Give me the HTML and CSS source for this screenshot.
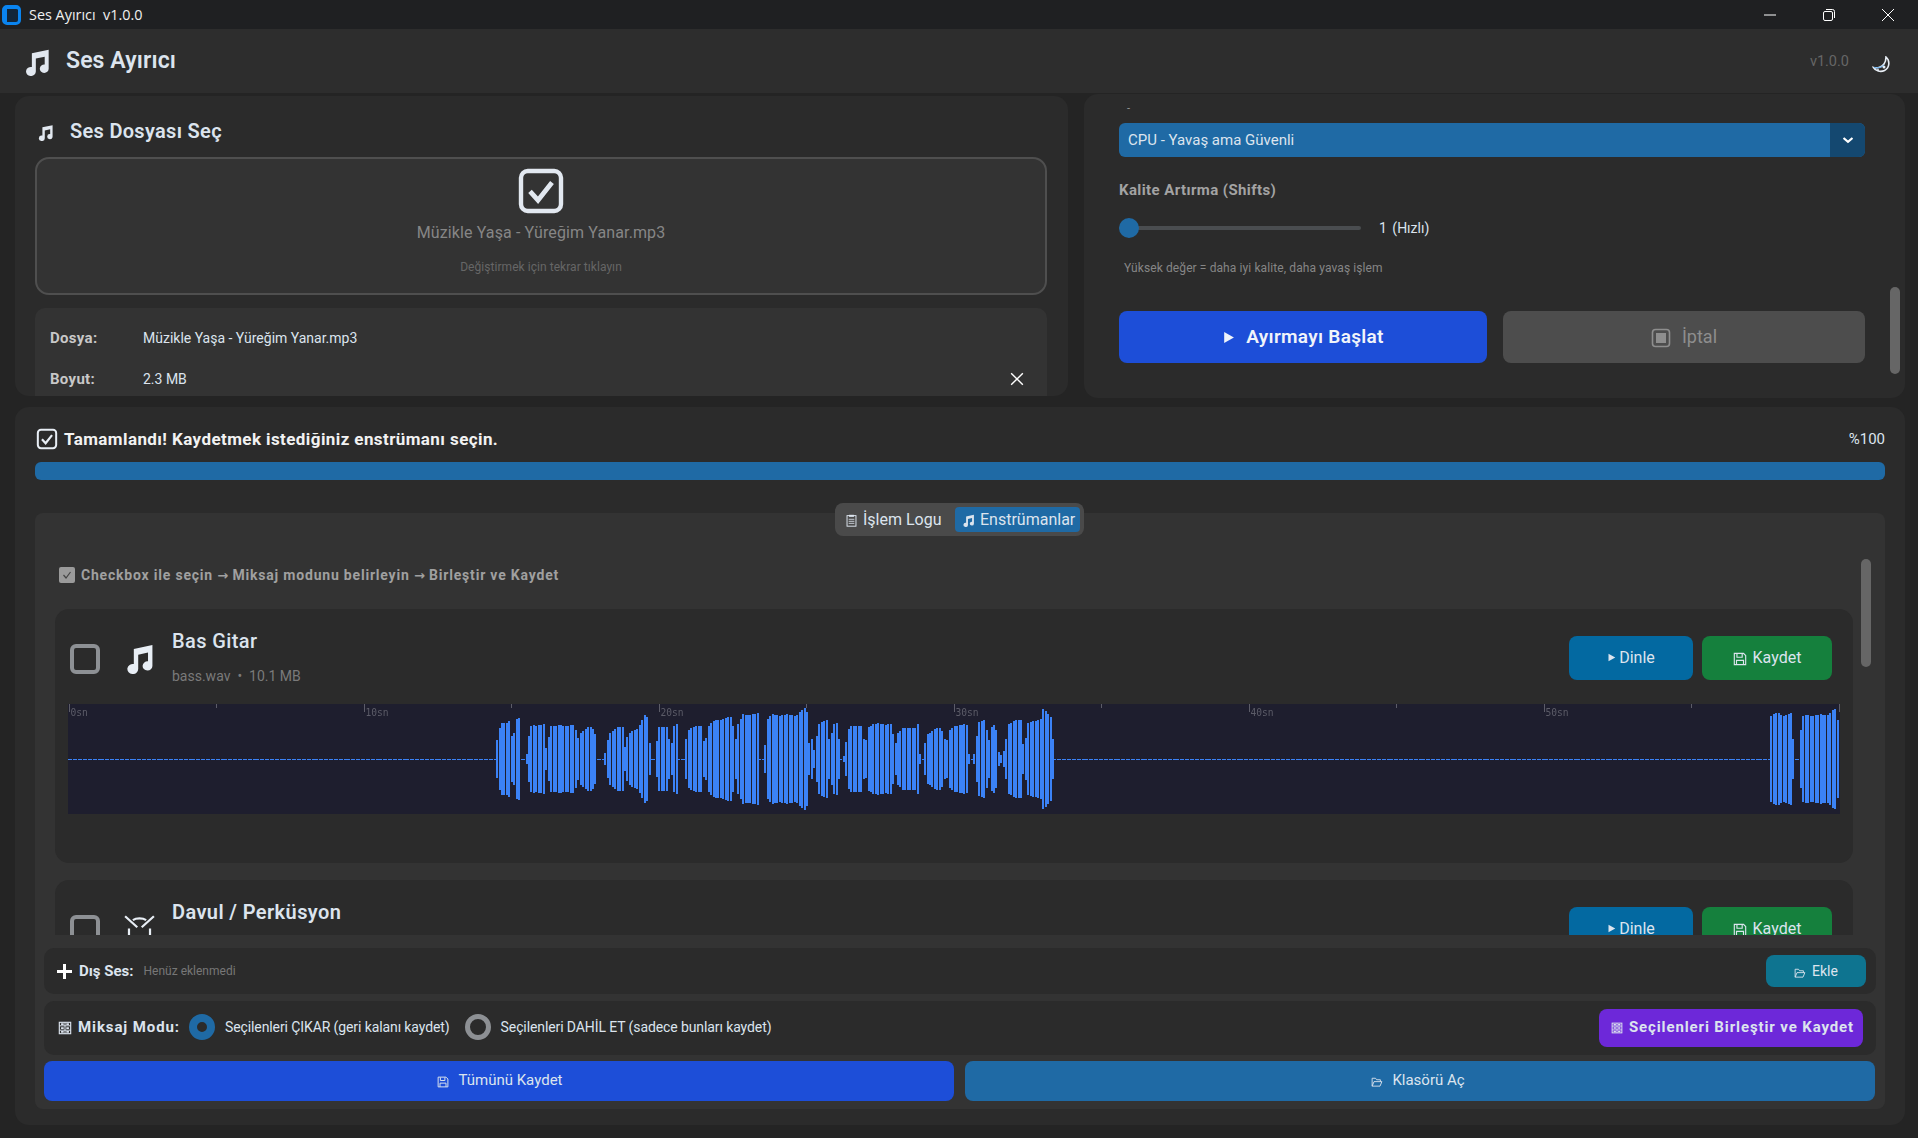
FILE: index.html
```html
<!DOCTYPE html>
<html lang="tr">
<head>
  <meta charset="UTF-8">
  <meta name="viewport" content="width=device-width, initial-scale=1.0">
  <title>Ses Ayırıcı</title>
  <link rel="stylesheet" href="styles.css">
</head>
<body>
  <svg class="sprite" aria-hidden="true">
    <symbol id="i-note" viewBox="0 0 24 24"><path d="M7.6 4.6 22 1.6v16.2a3.8 3.6 0 1 1-3.4-3.6V7.4l-7.6 1.7v11a4.2 3.9 0 1 1-3.4-3.8z" fill="currentColor"/></symbol>
    <symbol id="i-check" viewBox="0 0 24 24"><rect x="2" y="2" width="20" height="20" rx="3.4" fill="none" stroke="currentColor" stroke-width="2.2"/><path d="m6.5 12.2 4 4.4 7-8.8" fill="none" stroke="currentColor" stroke-width="2.400"/></symbol>
    <symbol id="i-play" viewBox="0 0 12 12"><path d="M2 1l9 5-9 5z" fill="currentColor"/></symbol>
    <symbol id="i-stop" viewBox="0 0 20 20"><rect x="1.5" y="1.5" width="17" height="17" rx="3" fill="none" stroke="currentColor" stroke-width="1.6"/><rect x="5" y="5" width="10" height="10" fill="currentColor"/></symbol>
    <symbol id="i-floppy" viewBox="0 0 16 16"><path d="M1.5 1.5h10.500l2.500 2.500v10.500h-13z" fill="none" stroke="currentColor" stroke-width="1.300"/><path d="M4.500 2v4h6V2M4 14.500V9.500h8v5" fill="none" stroke="currentColor" stroke-width="1.300"/></symbol>
    <symbol id="i-folder" viewBox="0 0 16 16"><path d="M1.500 13.500V3h4.500l1.500 2h5v2.500M1.500 13.500h10.500l2.500-6h-10.500z" fill="none" stroke="currentColor" stroke-width="1.200"/></symbol>
    <symbol id="i-clip" viewBox="0 0 14 16"><rect x="1.500" y="2" width="11" height="13" fill="none" stroke="currentColor" stroke-width="1.200"/><rect x="4" y="1" width="6" height="2.500" fill="currentColor"/><path d="M3.500 6.500h7M3.500 9h7M3.500 11.500h7" stroke="currentColor"/></symbol>
    <symbol id="i-abacus" viewBox="0 0 16 16"><rect x="1.500" y="1.500" width="13" height="13" fill="none" stroke="currentColor" stroke-width="1.300"/><path d="M1.500 5.500h13M1.500 10.500h13M8 1.500v13" stroke="currentColor" stroke-width="1.100"/><path d="M3.500 3.500h3M9.500 3.500h3M3.500 8h3M9.500 8h3M3.500 12.500h3M9.500 12.500h3" stroke="currentColor" stroke-width="2"/></symbol>
    <symbol id="i-drum" viewBox="0 0 28 28"><path d="M1 2l11 10M27 2 16 12" fill="none" stroke="currentColor" stroke-width="2"/><path d="M8 5.500C11 3.500 17 3.500 20 5.500M4.500 22V13M23.500 22V13" fill="none" stroke="currentColor" stroke-width="2"/></symbol>
  </svg>

  <div class="titlebar">
    <span class="app-logo"></span>
    <span class="app-title">Ses Ayırıcı&nbsp; v1.0.0</span>
    <div class="win-controls">
      <svg width="12" height="12" viewBox="0 0 12 12"><path d="M0 6h12" stroke="#fff"/></svg>
      <svg width="12" height="12" viewBox="0 0 12 12"><rect x=".5" y="2.500" width="9" height="9" rx="1.500" fill="none" stroke="#fff"/><path d="M3 .5h6.500a2 2 0 0 1 2 2V9" fill="none" stroke="#fff"/></svg>
      <svg width="12" height="12" viewBox="0 0 12 12"><path d="M0 0l12 12M12 0 0 12" stroke="#fff"/></svg>
    </div>
  </div>

  <header class="header">
    <svg class="header-icon"><use href="#i-note"/></svg>
    <h1 class="header-title">Ses Ayırıcı</h1>
    <span class="header-version">v1.0.0</span>
    <svg class="theme-icon" viewBox="0 0 20 17">
      <path d="M14 1c4 3.500 4 10.500-1.500 13.500-4 2-9 .5-11-3C5.500 12.500 10 11 12 8c1.500-2.200 2-4.500 2-7z" fill="none" stroke="#e8eef5" stroke-width="1.600"/>
      <path d="M2 11.500c3.500 1 7.500 0 10-2.500" fill="none" stroke="#5aa7ea"/>
      <circle cx="12" cy="11" r="1.500" fill="#e8eef5"/>
      <circle cx="6" cy="14" r="1" fill="#e8eef5"/>
    </svg>
  </header>

  <main class="main">
    <div class="top-row">
      <section class="panel file-panel">
        <div class="panel-title">
          <svg class="title-icon"><use href="#i-note"/></svg>
          <h2>Ses Dosyası Seç</h2>
        </div>
        <div class="dropzone">
          <svg class="drop-icon"><use href="#i-check"/></svg>
          <div class="drop-name">Müzikle Yaşa - Yüreğim Yanar.mp3</div>
          <div class="drop-hint">Değiştirmek için tekrar tıklayın</div>
        </div>
        <div class="file-info">
          <div class="info-row"><span class="info-key">Dosya:</span><span>Müzikle Yaşa - Yüreğim Yanar.mp3</span></div>
          <div class="info-row"><span class="info-key">Boyut:</span><span>2.3 MB</span>
            <svg class="info-close" viewBox="0 0 12 12"><path d="M1 1l10 10M11 1 1 11" stroke="#fff" stroke-width="1.200"/></svg>
          </div>
        </div>
      </section>

      <section class="panel settings-panel">
        <div class="cut-label">-</div>
        <div class="select">
          <span class="select-text">CPU - Yavaş ama Güvenli</span>
          <span class="select-arrow"><svg width="12" height="8" viewBox="0 0 12 8"><path d="M1.500 2l4.500 3.800 4.500-3.800" fill="none" stroke="#fff" stroke-width="2.200"/></svg></span>
        </div>
        <div class="field-label">Kalite Artırma (Shifts)</div>
        <div class="slider-row">
          <div class="slider"><span class="slider-knob"></span></div>
          <span class="slider-value">1 (Hızlı)</span>
        </div>
        <div class="field-note">Yüksek değer = daha iyi kalite, daha yavaş işlem</div>
        <div class="action-row">
          <button class="btn btn-start"><svg class="play-big"><use href="#i-play"/></svg>Ayırmayı Başlat</button>
          <button class="btn btn-cancel"><svg class="stop-icon"><use href="#i-stop"/></svg>İptal</button>
        </div>
        <span class="scroll-thumb settings-thumb"></span>
      </section>
    </div>

    <section class="panel result-panel">
      <div class="status-row">
        <svg class="status-icon"><use href="#i-check"/></svg>
        <span class="status-text">Tamamlandı! Kaydetmek istediğiniz enstrümanı seçin.</span>
        <span class="status-percent">%100</span>
      </div>
      <div class="progress"></div>

      <div class="tabview">
        <div class="tabs">
          <span class="tab"><svg class="tab-icon"><use href="#i-clip"/></svg>İşlem Logu</span>
          <span class="tab tab-active"><svg class="tab-icon"><use href="#i-note"/></svg>Enstrümanlar</span>
        </div>
        <span class="scroll-thumb tab-thumb"></span>

        <div class="stem-scroll">
          <div class="hint">
            <span class="hint-box"><svg width="10" height="10" viewBox="0 0 10 10"><path d="M1.500 5l2.500 3 4.500-6" fill="none" stroke="#444" stroke-width="1.200"/></svg></span>
            <span>Checkbox ile seçin <span class="hint-arrow">→</span> Miksaj modunu belirleyin <span class="hint-arrow">→</span> Birleştir ve Kaydet</span>
          </div>

          <article class="stem-card">
            <div class="stem-head">
              <span class="stem-check"></span>
              <svg class="stem-icon"><use href="#i-note"/></svg>
              <div class="stem-info">
                <div class="stem-name">Bas Gitar</div>
                <div class="stem-meta">bass.wav &nbsp;•&nbsp; 10.1 MB</div>
              </div>
              <button class="btn btn-listen"><svg class="play-small"><use href="#i-play"/></svg>Dinle</button>
              <button class="btn btn-save"><svg class="btn-icon"><use href="#i-floppy"/></svg>Kaydet</button>
            </div>
            <div class="waveform" id="waveform"><canvas id="waveCanvas" width="1772" height="110"></canvas></div>
          </article>

          <article class="stem-card">
            <div class="stem-head">
              <span class="stem-check"></span>
              <svg class="stem-icon"><use href="#i-drum"/></svg>
              <div class="stem-info">
                <div class="stem-name stem-name-bold">Davul / Perküsyon</div>
                <div class="stem-meta">&nbsp;</div>
              </div>
              <button class="btn btn-listen"><svg class="play-small"><use href="#i-play"/></svg>Dinle</button>
              <button class="btn btn-save"><svg class="btn-icon"><use href="#i-floppy"/></svg>Kaydet</button>
            </div>
          </article>
        </div>

        <div class="bar-row extra-row">
          <svg class="plus-icon" viewBox="0 0 15 15"><path d="M7.500 0v15M0 7.500h15" stroke="#fff" stroke-width="3"/></svg>
          <span class="bar-label">Dış Ses:</span>
          <span class="extra-empty">Henüz eklenmedi</span>
          <button class="btn btn-add"><svg class="add-icon"><use href="#i-folder"/></svg>Ekle</button>
        </div>

        <div class="bar-row mix-row">
          <svg class="mix-icon"><use href="#i-abacus"/></svg>
          <span class="bar-label mix-label">Miksaj Modu:</span>
          <span class="radio radio-on"></span>
          <span class="radio-text">Seçilenleri ÇIKAR (geri kalanı kaydet)</span>
          <span class="radio"></span>
          <span class="radio-text">Seçilenleri DAHİL ET (sadece bunları kaydet)</span>
          <button class="btn btn-merge"><svg class="add-icon"><use href="#i-abacus"/></svg>Seçilenleri Birleştir ve Kaydet</button>
        </div>

        <div class="footer-row">
          <button class="btn btn-all"><svg class="add-icon"><use href="#i-floppy"/></svg>Tümünü Kaydet</button>
          <button class="btn btn-folder"><svg class="add-icon"><use href="#i-folder"/></svg>Klasörü Aç</button>
        </div>
      </div>
    </section>
  </main>

  <script src="waveform.js"></script>
</body>
</html>
```

FILE: styles.css
```css
* {
  box-sizing: border-box;
}

body {
  margin: 0;
  height: 1138px;
  overflow: hidden;
  background-color: #242424;
  color: #dce4ee;
  font-family: Roboto, "Liberation Sans", sans-serif;
  font-size: 14px;
}

.sprite {
  position: absolute;
  width: 0;
  height: 0;
}

h1, h2 {
  margin: 0;
}

button {
  border: none;
  font-family: inherit;
}

/* window bar */
.titlebar {
  height: 29px;
  display: flex;
  align-items: center;
  background-color: #1f2022;
  padding-left: 2px;
}

.app-logo {
  width: 19px;
  height: 20px;
  border-radius: 5px;
  background-color: #12263a;
  border-style: solid;
  border-color: #0a84f0;
  border-width: 4px 3px 3px 5px;
}

.app-title {
  margin-left: 8px;
  color: #f0f0f0;
  font-family: "Open Sans", sans-serif;
  font-size: 14.4px;
}

.win-controls {
  margin-left: auto;
  display: flex;
  gap: 47px;
  padding-right: 24px;
}

.header {
  height: 64px;
  display: flex;
  align-items: center;
  background-color: #2d2d2d;
  padding: 0 26px 0 23px;
}

.header-icon {
  width: 28px;
  height: 28px;
  margin-top: 2px;
  color: #e2e8f0;
}

.header-title {
  margin: -2px 0 0 15px;
  font-size: 23px;
  font-weight: 600;
  letter-spacing: .1px;
  color: #dce4ee;
}

.header-version {
  margin-left: auto;
  color: #666;
  font-size: 14.5px;
}

.theme-icon {
  width: 20px;
  height: 17px;
  margin: 7px 0 0 23px;
}

/* panels */
.main {
  padding-left: 15px;
}

.top-row {
  display: grid;
  grid-template-columns: 1053px 821px;
  column-gap: 16px;
  align-items: start;
}

.panel {
  position: relative;
  background-color: #2b2b2b;
  border-radius: 14px;
  overflow: hidden;
}

.file-panel {
  height: 300px;
  margin-top: 3px;
  padding: 20px 21px 0 20px;
}

.panel-title {
  height: 30px;
  display: flex;
  align-items: center;
  padding-left: 2px;
}

.panel-title h2 {
  margin-left: 16px;
  font-size: 20px;
  font-weight: 600;
  letter-spacing: .3px;
  color: #dce4ee;
}

.title-icon {
  width: 17px;
  height: 17px;
  margin-top: 2px;
  color: #e2e8f0;
}

.dropzone {
  height: 138px;
  margin-top: 11px;
  border: 2px solid #4f4f4f;
  border-radius: 14px;
  background-color: #333;
  display: flex;
  flex-direction: column;
  align-items: center;
}

.drop-icon {
  width: 48px;
  height: 48px;
  margin-top: 8px;
  color: #e2e8f0;
}

.drop-name {
  margin-top: 6px;
  color: #868686;
  font-size: 16px;
  letter-spacing: .12px;
  line-height: 24px;
}

.drop-hint {
  margin-top: 14px;
  color: #666;
  font-size: 12px;
  letter-spacing: .05px;
  line-height: 16px;
}

.file-info {
  height: 120px;
  margin-top: 13px;
  padding: 20px 23px 0 15px;
  border-radius: 10px;
  background-color: #333;
}

.info-row {
  height: 20px;
  display: flex;
  align-items: center;
  margin-bottom: 21px;
  color: #dce4ee;
}

.info-key {
  width: 93px;
  font-size: 15px;
  font-weight: 700;
  letter-spacing: .3px;
  color: #c8c8c8;
}

.info-close {
  width: 14px;
  height: 14px;
  margin-left: auto;
}

.settings-panel {
  height: 304px;
  margin-top: 1px;
  padding: 0 40px 0 35px;
}

.cut-label {
  height: 29px;
  line-height: 29px;
  padding-left: 8px;
  color: #999;
  font-size: 11px;
}

.select {
  height: 34px;
  display: flex;
  border-radius: 6px;
  background-color: #1f6aa5;
  overflow: hidden;
}

.select-text {
  flex: 1;
  padding-left: 9px;
  line-height: 34px;
  font-size: 15px;
  color: #dce4ee;
}

.select-arrow {
  width: 35px;
  display: flex;
  align-items: center;
  justify-content: center;
  background-color: #144870;
}

.field-label {
  margin-top: 23px;
  line-height: 20px;
  font-size: 15px;
  font-weight: 700;
  letter-spacing: .4px;
  color: #a3a3a3;
}

.slider-row {
  height: 20px;
  margin-top: 18px;
  display: flex;
  align-items: center;
}

.slider {
  width: 242px;
  height: 4px;
  display: flex;
  align-items: center;
  border-radius: 2px;
  background-color: #4a4d50;
}

.slider-knob {
  width: 20px;
  height: 20px;
  border-radius: 50%;
  background-color: #1f6aa5;
}

.slider-value {
  margin-left: 18px;
  font-size: 14px;
  word-spacing: 2px;
}

.field-note {
  margin-top: 22px;
  padding-left: 5px;
  line-height: 16px;
  font-size: 12px;
  letter-spacing: .1px;
  color: #868686;
}

.action-row {
  margin-top: 35px;
  display: flex;
  gap: 16px;
}

.btn {
  display: flex;
  align-items: center;
  justify-content: center;
  border-radius: 8px;
  color: #dce4ee;
}

.btn-start {
  width: 368px;
  height: 52px;
  padding-bottom: 2px;
  background-color: #1d4ed8;
  color: #f0f4fa;
  font-size: 19px;
  font-weight: 600;
  letter-spacing: .3px;
}

.btn-cancel {
  width: 362px;
  height: 52px;
  padding-bottom: 2px;
  background-color: #4d4d4d;
  color: #8e8e8e;
  font-size: 18px;
}

.play-big {
  width: 13px;
  height: 13px;
  margin: 2px 11px 0 0;
}

.stop-icon {
  width: 20px;
  height: 20px;
  margin: 2px 11px 0 0;
}

.scroll-thumb {
  position: absolute;
  width: 10px;
  border-radius: 5px;
  background-color: #666;
}

.settings-thumb {
  top: 193px;
  left: 806px;
  height: 87px;
}

/* results */
.result-panel {
  height: 718px;
  width: 1890px;
  margin-top: 9px;
  padding: 20px 20px 0 20px;
  overflow: visible;
}

.status-row {
  height: 24px;
  display: flex;
  align-items: center;
}

.status-icon {
  width: 22px;
  height: 22px;
  margin-left: 1px;
  color: #e8eef5;
}

.status-text {
  margin-left: 6px;
  font-size: 17px;
  font-weight: 700;
  letter-spacing: .41px;
  color: #f2f2f2;
}

.status-percent {
  margin-left: auto;
  font-size: 15px;
  color: #dce4ee;
}

.progress {
  height: 18px;
  margin-top: 11px;
  border-radius: 6px;
  background-color: #1f6aa5;
}

.tabview {
  position: relative;
  height: 596px;
  margin-top: 33px;
  border-radius: 8px;
  background-color: #333;
}

.tabs {
  position: absolute;
  z-index: 2;
  top: -10px;
  left: 800px;
  width: 249px;
  height: 33px;
  display: flex;
  align-items: center;
  justify-content: space-between;
  padding: 0 4px 0 10px;
  border-radius: 8px;
  background-color: #4a4a4a;
}

.tab {
  display: flex;
  align-items: center;
  height: 25px;
  padding-bottom: 1px;
  font-size: 16px;
  color: #dce4ee;
}

.tab-active {
  width: 125px;
  padding-left: 7px;
  border-radius: 4px;
  background-color: #1f6aa5;
}

.tab-icon {
  width: 13px;
  height: 13px;
  margin: 3px 5px 0 0;
}

.tab-thumb {
  z-index: 2;
  top: 46px;
  left: 1826px;
  height: 108px;
}

.stem-scroll {
  height: 422px;
  overflow: hidden;
  padding: 54px 32px 0 20px;
}

.hint {
  height: 16px;
  margin-left: 4px;
  margin-bottom: 26px;
  display: flex;
  align-items: center;
  font-weight: 700;
  letter-spacing: .8px;
  color: #a0a0a0;
}

.hint-arrow {
  font-family: "DejaVu Sans", sans-serif;
  font-size: 13px;
  letter-spacing: 0;
}

.hint-box {
  width: 16px;
  height: 16px;
  margin-right: 6px;
  display: flex;
  align-items: center;
  justify-content: center;
  border-radius: 2px;
  background-color: #9a9a9a;
}

.stem-card {
  height: 254px;
  margin-bottom: 17px;
  padding: 0 13px;
  border-radius: 14px;
  background-color: #2b2b2b;
}

.stem-head {
  height: 95px;
  padding: 20px 8px 17px 2px;
  display: flex;
  align-items: center;
}

.stem-check {
  width: 30px;
  height: 30px;
  margin-top: 1px;
  border: 4px solid #8d9094;
  border-radius: 6px;
}

.stem-icon {
  width: 31px;
  height: 31px;
  margin-left: 24px;
  color: #e8eef5;
}

.stem-info {
  margin-left: 17px;
  margin-right: auto;
}

.stem-name {
  line-height: 24px;
  font-size: 20px;
  font-weight: 500;
  letter-spacing: .4px;
  color: #dce4ee;
}

.stem-name-bold {
  font-weight: 600;
}

.stem-meta {
  margin-top: 11px;
  line-height: 24px;
  color: #7a7a7a;
}

.btn-listen {
  width: 124px;
  height: 44px;
  padding-bottom: 2px;
  background-color: #0369a1;
  font-size: 16px;
}

.btn-save {
  width: 130px;
  height: 44px;
  margin-left: 9px;
  padding-bottom: 2px;
  background-color: #15803d;
  font-size: 16px;
}

.play-small {
  width: 9px;
  height: 11px;
  margin-right: 3px;
}

.btn-icon {
  width: 14px;
  height: 14px;
  margin: 3px 6px 0 0;
}

.waveform {
  position: relative;
  height: 110px;
  background-color: #1e1e2e;
}

.waveform canvas {
  display: block;
}

.wave-tick {
  position: absolute;
  top: 0;
  width: 1px;
  height: 4px;
  background-color: #5c5c68;
}

.wave-tick-major {
  height: 8px;
}

.wave-label {
  position: absolute;
  top: 3px;
  font-family: "DejaVu Sans Mono", monospace;
  font-size: 9.6px;
  line-height: 12px;
  color: #5c5c68;
}

.bar-row {
  display: flex;
  align-items: center;
  margin: 0 9px;
  border-radius: 10px;
  background-color: #2b2b2b;
}

.extra-row {
  height: 46px;
  margin-top: 13px;
  padding: 0 10px 0 13px;
}

.plus-icon {
  width: 15px;
  height: 15px;
}

.bar-label {
  margin-left: 7px;
  font-size: 15px;
  font-weight: 700;
  color: #dce4ee;
}

.extra-empty {
  margin-left: 10px;
  margin-right: auto;
  font-size: 12px;
  color: #777;
}

.btn-add {
  width: 100px;
  height: 32px;
  padding-bottom: 1px;
  background-color: #0e7490;
  font-size: 14px;
}

.add-icon {
  width: 12px;
  height: 12px;
  margin: 3px 6px 0 0;
}

.mix-row {
  height: 54px;
  margin-top: 7px;
  padding: 0 13px 2px 14px;
}

.mix-icon {
  width: 14px;
  height: 14px;
  margin-top: 2px;
}

.mix-label {
  margin-left: 6px;
  letter-spacing: .9px;
}

.radio {
  width: 26px;
  height: 26px;
  flex: none;
  border: 5px solid #8d9094;
  border-radius: 50%;
}

.radio-on {
  margin-left: 9px;
  border: 8px solid #1f6aa5;
}

.radio-text {
  margin: 0 15px 0 10px;
  letter-spacing: -.1px;
}

.btn-merge {
  width: 264px;
  height: 38px;
  margin: 2px 0 0 auto;
  padding: 0 0 3px 3px;
  background-color: #6d28d9;
  font-size: 15px;
  font-weight: 700;
  letter-spacing: .88px;
}

.footer-row {
  display: grid;
  grid-template-columns: 1fr 1fr;
  gap: 11px;
  margin: 6px 10px 0 9px;
}

.btn-all,
.btn-folder {
  height: 40px;
  padding-bottom: 4px;
  font-size: 15px;
}

.btn-all {
  padding-left: 8px;
  background-color: #1d4ed8;
}

.btn-folder {
  padding-left: 2px;
  background-color: #1f6aa5;
}

.btn-all .add-icon,
.btn-folder .add-icon {
  margin: 5px 9px 0 0;
}
```

FILE: waveform.js
```js
// envelope of the track: [x, half height], x read off the picture
const bursts = [
  { origin: 490, pts: [[0,0],[16,0],[18,19],[28,35],[50,37],[55,38],[60,24],[67,19],[75,39],[85,42],[88,42],[90,0],[99,0],[102,5],[108,5],[110,17],[120,32],[130,34],[160,34],[165,10],[170,15],[178,33],[250,34],[252,36],[258,17],[265,25],[290,32],[310,30],[317,19],[319,0],[340,0],[343,6],[350,19],[355,26],[380,32],[395,32],[402,12],[408,22],[418,27],[440,30],[460,44],[468,44],[472,22],[478,12],[480,0],[492,0],[495,10],[503,32],[530,32],[537,14],[545,17],[550,35],[562,35],[564,0],[580,0],[585,19],[595,31],[635,33],[640,9],[650,32],[670,39],[700,40],[722,42],[725,47],[730,5],[737,32],[755,44],[800,45],[804,45],[806,0],[818,0],[820,5],[825,24],[830,40],[840,44]] },
  { origin: 770, pts: [[0,44],[80,44],[85,46],[100,51],[108,47],[112,14],[122,22],[128,5],[135,19],[145,35],[165,40],[172,38],[176,9],[185,35],[195,35],[202,40],[205,9],[208,0],[218,0],[220,10],[225,15],[232,29],[240,33],[272,33],[277,20],[285,19],[292,32],[305,35],[360,35],[365,30],[370,10],[380,26],[395,31],[435,31],[442,37],[447,6],[449,0],[458,0],[462,15],[470,25],[495,31],[512,31],[518,22],[527,17],[535,29],[550,32],[585,36],[590,32],[595,5],[598,0],[608,0],[612,10],[618,25],[622,37],[645,39],[650,10],[660,32],[675,36],[680,10],[687,4],[695,4],[702,12],[712,35],[740,39],[750,40],[755,22],[760,9],[770,35],[790,38],[810,40],[815,50],[830,45],[845,40],[847,0]] },
  { origin: 1400, pts: [[1105,0],[1107,7],[1110,43],[1130,46],[1150,43],[1172,46],[1176,30],[1180,0],[1198,0],[1200,38],[1205,43],[1240,44],[1280,44],[1298,50],[1306,49],[1310,39],[1316,24],[1318,0]] }
];

const waveLeft = 68;
const envelope = [];
bursts.forEach(b => b.pts.forEach(p => envelope.push([b.origin + p[0] / 3 - waveLeft, p[1]])));

function heightAt(x) {
  for (let i = 1; i < envelope.length; i++) {
    const [x0, h0] = envelope[i - 1];
    const [x1, h1] = envelope[i];
    if (x >= x0 && x <= x1) {
      return x1 === x0 ? h1 : h0 + (h1 - h0) * (x - x0) / (x1 - x0);
    }
  }
  return 0;
}

function drawWave() {
  const ctx = document.getElementById('waveCanvas').getContext('2d');
  ctx.fillStyle = '#3b82f6';
  for (let i = 0; i < 720; i++) {
    const x = i * 2.46;
    if (x > 1770) break;
    const h = heightAt(x);
    const px = Math.round(x);
    if (h < 1) {
      ctx.fillRect(px, 55, 2, 1);
    } else {
      const hh = Math.round(h * (1 + 0.015 * Math.sin(i * 7.3)));
      ctx.fillRect(px, 55 - hh, 2, hh * 2);
    }
  }
}

function drawTicks() {
  const wave = document.getElementById('waveform');
  for (let s = 0; s <= 60; s += 5) {
    const left = 0.5 + s * 29.5;
    const tick = document.createElement('span');
    tick.className = s % 10 === 0 ? 'wave-tick wave-tick-major' : 'wave-tick';
    tick.style.left = left + 'px';
    wave.appendChild(tick);
    if (s % 10 === 0 && s < 60) {
      const label = document.createElement('span');
      label.className = 'wave-label';
      label.style.left = (left + 2) + 'px';
      label.textContent = s + 'sn';
      wave.appendChild(label);
    }
  }
}

drawWave();
drawTicks();
```
